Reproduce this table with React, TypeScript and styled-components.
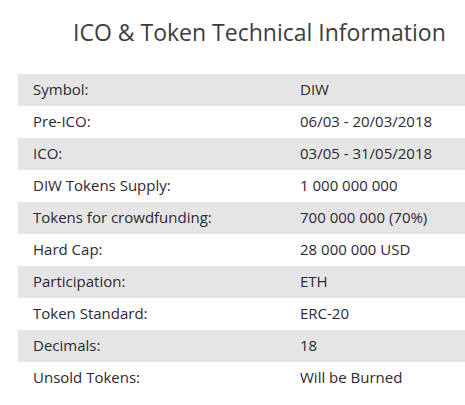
import React from 'react';
import styled, { createGlobalStyle } from 'styled-components';

const GlobalStyle = createGlobalStyle`
  body {
    margin: 0;
    background: #ffffff;
    font-family: "Open Sans", "Noto Sans", sans-serif;
  }
`;

const Wrapper = styled.div`
  width: 465px;
  height: 405px;
  overflow: hidden;
  padding-top: 16px;
  box-sizing: border-box;
`;

const Title = styled.h2`
  margin: 0 0 26px 73px;
  font-size: 23px;
  font-weight: 400;
  line-height: 32px;
  color: #3d3d3d;
  white-space: nowrap;
`;

const Table = styled.div`
  margin-left: 18px;
  display: flex;
  flex-direction: column;
`;

const Row = styled.div<{ $striped: boolean }>`
  display: grid;
  grid-template-columns: 267px 1fr;
  height: 32px;
  align-items: center;
  background: ${(p) => (p.$striped ? '#e5e5e5' : 'transparent')};
`;

const Cell = styled.div`
  padding-left: 15px;
  font-size: 15px;
  line-height: 20px;
  color: #2e2832;
  white-space: nowrap;
  margin-top: -3px;
`;

const rows: [string, string][] = [
  ['Symbol:', 'DIW'],
  ['Pre-ICO:', '06/03 - 20/03/2018'],
  ['ICO:', '03/05 - 31/05/2018'],
  ['DIW Tokens Supply:', '1 000 000 000'],
  ['Tokens for crowdfunding:', '700 000 000 (70%)'],
  ['Hard Cap:', '28 000 000 USD'],
  ['Participation:', 'ETH'],
  ['Token Standard:', 'ERC-20'],
  ['Decimals:', '18'],
  ['Unsold Tokens:', 'Will be Burned'],
];

const App = () => {
  return (
    <Wrapper>
      <GlobalStyle />
      <Title>ICO &amp; Token Technical Information</Title>
      <Table>
        {rows.map(([label, value], i) => (
          <Row key={label} $striped={i % 2 === 0}>
            <Cell>{label}</Cell>
            <Cell>{value}</Cell>
          </Row>
        ))}
      </Table>
    </Wrapper>
  );
};

export default App;
